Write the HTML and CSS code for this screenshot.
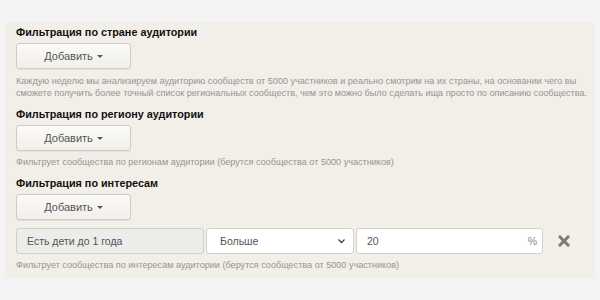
FILE: index.html
```html
<!DOCTYPE html>
<html lang="ru">
<head>
<meta charset="utf-8">
<link rel="stylesheet" href="styles.css">
</head>
<body>
<div class="panel">
  <section class="filter">
    <h3 class="filter-title">Фильтрация по стране аудитории</h3>
    <button class="btn-add">Добавить <span class="caret"></span></button>
    <p class="hint">Каждую неделю мы анализируем аудиторию сообществ от 5000 участников и реально смотрим на их страны, на основании чего вы сможете получить более точный список региональных сообществ, чем это можно было сделать ища просто по описанию сообщества.</p>
  </section>
  <section class="filter">
    <h3 class="filter-title">Фильтрация по региону аудитории</h3>
    <button class="btn-add">Добавить <span class="caret"></span></button>
    <p class="hint">Фильтрует сообщества по регионам аудитории (берутся сообщества от 5000 участников)</p>
  </section>
  <section class="filter">
    <h3 class="filter-title">Фильтрация по интересам</h3>
    <button class="btn-add">Добавить <span class="caret"></span></button>
    <div class="row">
      <div class="field field-static">Есть дети до 1 года</div>
      <div class="field field-select">
        <span>Больше</span>
        <svg class="chev" width="9" height="6" viewBox="0 0 9 6"><path d="M1.5 1.5l3 3 3-3" fill="none" stroke="#444" stroke-width="1.3"/></svg>
      </div>
      <div class="field field-input">
        <span>20</span>
        <span class="pct">%</span>
      </div>
      <svg class="remove" width="12" height="12" viewBox="0 0 12 12"><path d="M2 2L10 10M10 2L2 10" stroke="#7a7a7a" stroke-width="3" stroke-linecap="square"/></svg>
    </div>
    <p class="hint">Фильтрует сообщества по интересам аудитории (берутся сообщества от 5000 участников)</p>
  </section>
</div>
</body>
</html>
```
FILE: styles.css
```css
html, body {
  margin: 0;
  padding: 0;
}
body {
  background: #f4f4f4;
  font-family: "Liberation Sans", Arial, sans-serif;
  padding-top: 22px;
}
.panel {
  margin: 0 5px;
  background: #f2eee8;
  padding: 2px 2px 7px 11px;
}
.filter-title {
  margin: 7px 0 0;
  font-size: 10.8px;
  line-height: 16px;
  font-weight: bold;
  color: #111;
}
.filter:first-child .filter-title {
  margin-top: 0;
}
.btn-add {
  display: flex;
  align-items: center;
  justify-content: center;
  gap: 4px;
  margin-top: 3px;
  width: 115px;
  height: 26px;
  padding: 0;
  border: 1px solid #cfcac4;
  border-radius: 3px;
  background: linear-gradient(#fbfaf8, #f1efec);
  box-shadow: 0 1px 1px rgba(0,0,0,0.06);
  font-family: inherit;
  font-size: 11px;
  color: #555;
}
.caret {
  display: inline-block;
  width: 0;
  height: 0;
  border-left: 3px solid transparent;
  border-right: 3px solid transparent;
  border-top: 3px solid #555;
  margin-top: 1px;
}
.hint {
  margin: 5px 0 0;
  font-size: 9.1px;
  line-height: 12px;
  color: #959595;
}
.filter:first-child .hint {
  margin-top: 6px;
}
.row {
  display: flex;
  align-items: center;
  gap: 2px;
  margin-top: 8px;
}
.field {
  display: flex;
  align-items: center;
  box-sizing: border-box;
  height: 26px;
  border: 1px solid #d3cfca;
  border-radius: 3px;
  background: #fff;
  font-size: 10.5px;
  color: #555;
}
.field-static {
  width: 188px;
  padding-left: 10px;
  background: #ececea;
}
.field-select {
  width: 148px;
  padding: 0 7px 0 13px;
  justify-content: space-between;
}
.field-input {
  width: 187px;
  padding: 0 5px 0 10px;
  justify-content: space-between;
}
.pct {
  color: #888;
}
.remove {
  margin-left: 13px;
}
```
